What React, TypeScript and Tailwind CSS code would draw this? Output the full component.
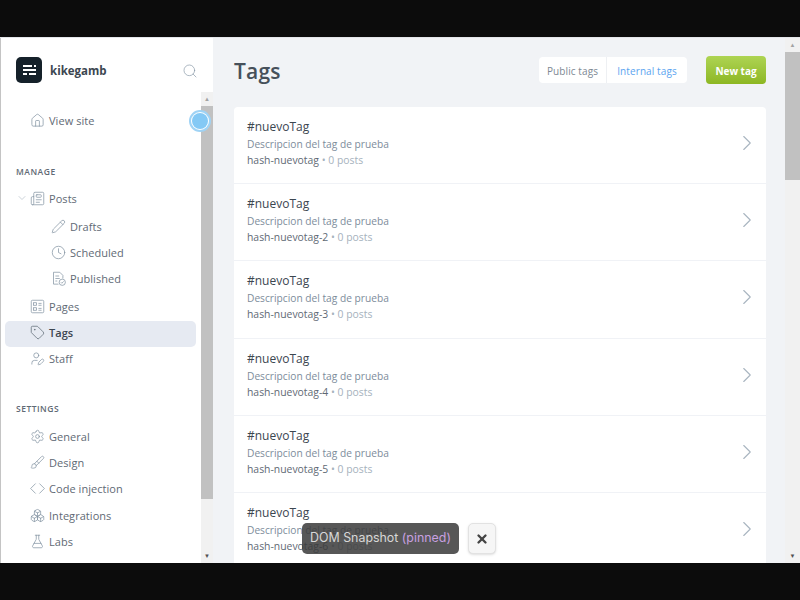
import React from "react";
import {
  Boxes,
  Brush,
  ChevronDown,
  ChevronRight,
  Clock,
  FlaskConical,
  House,
  Newspaper,
  Pencil,
  Search,
  Settings,
  Tag,
  UserPen,
  X,
} from "lucide-react";

type IconProps = { className?: string; size?: number; strokeWidth?: number };
type Item = { label: string; icon: React.ElementType; sub?: boolean; active?: boolean; caret?: boolean; spacing?: string };

function PagesIcon({ className, size, strokeWidth }: IconProps) {
  return (
    <svg className={className} width={size} height={size} viewBox="0 0 24 24" fill="none" stroke="currentColor" strokeWidth={strokeWidth}>
      <rect x="2" y="2" width="20" height="20" rx="2" />
      <rect x="5.5" y="6" width="5" height="4" />
      <rect x="5.5" y="14" width="5" height="4" />
      <path d="M13.5 7h5M13.5 10h5M13.5 15h5M13.5 18h5" />
    </svg>
  );
}

function PublishedIcon({ className, size, strokeWidth }: IconProps) {
  return (
    <svg className={className} width={size} height={size} viewBox="0 0 24 24" fill="none" stroke="currentColor" strokeWidth={strokeWidth}>
      <path d="M12 21H4V2h10l5 5v5" />
      <path d="M7 8h6M7 12h7M7 16h3" />
      <circle cx="18" cy="18" r="5" />
      <path d="M15.8 18l1.6 1.6 2.8-3" />
    </svg>
  );
}

function CodeIcon({ className, size, strokeWidth }: IconProps) {
  return (
    <svg className={className} width={size} height={size} viewBox="0 0 24 24" fill="none" stroke="currentColor" strokeWidth={strokeWidth}>
      <path d="M9 4l-8 8 8 8M15 4l8 8-8 8" />
    </svg>
  );
}

const manage: Item[] = [
  { label: "Posts", icon: Newspaper, caret: true },
  { label: "Drafts", icon: Pencil, sub: true, spacing: "mt-[2px]" },
  { label: "Scheduled", icon: Clock, sub: true },
  { label: "Published", icon: PublishedIcon, sub: true },
  { label: "Pages", icon: PagesIcon, spacing: "mt-[2px]" },
  { label: "Tags", icon: Tag, active: true },
  { label: "Staff", icon: UserPen },
];

const settings: Item[] = [
  { label: "General", icon: Settings },
  { label: "Design", icon: Brush },
  { label: "Code injection", icon: CodeIcon },
  { label: "Integrations", icon: Boxes, spacing: "mt-[1px]" },
  { label: "Labs", icon: FlaskConical },
];

const tags = ["hash-nuevotag", "hash-nuevotag-2", "hash-nuevotag-3", "hash-nuevotag-4", "hash-nuevotag-5", "hash-nuevotag-6"];

function NavRow({ item }: { item: Item }) {
  const Icon = item.icon;
  return (
    <div
      className={`relative flex items-center h-[26px] pb-[3px] ml-[4px] mr-[5px] rounded-[5px] ${item.spacing ?? ""} ${item.sub ? "pl-[46px]" : "pl-[25px]"} ${item.active ? "bg-[#e6eaf2] font-semibold text-[#3c4650]" : "text-[#5f6a75]"}`}
    >
      {item.caret && <ChevronDown className="absolute left-[11px] top-[5px] text-[#a9b5c0]" size={12} strokeWidth={1.2} />}
      <Icon className={item.active ? "text-[#5f6b76]" : "text-[#8595a4]"} size={15} strokeWidth={1.2} />
      <span className="ml-[4px] text-[11px] leading-none tracking-[0.05px]">{item.label}</span>
    </div>
  );
}

function Scrollbar({ thumbHeight, width }: { thumbHeight: number; width: string }) {
  return (
    <div className={`${width} shrink-0 bg-[#f1f1f1] flex flex-col items-center`}>
      <div className="h-[14px] shrink-0 flex items-center justify-center text-[6px] text-[#a3a3a3]">▲</div>
      <div className="flex-1 w-full">
        <div className="w-full bg-[#c1c1c1]" style={{ height: thumbHeight }} />
      </div>
      <div className="h-[14px] shrink-0 flex items-center justify-center text-[6px] text-[#505050]">▼</div>
    </div>
  );
}

export default function App() {
  return (
    <div className="relative h-screen w-full bg-[#0c0c0c] py-[37px] font-['Open_Sans','Noto_Sans',sans-serif]">
      <div className="flex h-full w-full overflow-hidden border-t border-[#e4e6ea]">
        {/* Sidebar */}
        <aside className="w-[213px] shrink-0 flex flex-col bg-white border-l border-[#c4c4c4]">
          <div className="h-[54px] shrink-0 flex items-center pl-[15px] pr-[15px] pt-[9px]">
            <div className="w-[26px] h-[26px] rounded-[5px] bg-[#15212a] flex flex-col items-center justify-center gap-[2px]">
              <div className="flex gap-[2px]">
                <span className="w-[9px] h-[2px] bg-white" />
                <span className="w-[2px] h-[2px] bg-white" />
              </div>
              <div className="w-[13px] h-[2px] bg-white" />
              <div className="flex gap-[2px]">
                <span className="w-[4px] h-[2px] bg-white" />
                <span className="w-[7px] h-[2px] bg-white" />
              </div>
            </div>
            <span className="ml-[8px] mt-[2px] text-[11.5px] font-bold text-[#3c4650]">kikegamb</span>
            <Search className="ml-auto mt-[2px] text-[#8595a4]" size={16} strokeWidth={1} />
          </div>
          <div className="flex flex-1 min-h-0">
            <nav className="flex-1 min-w-0 pt-[17px] overflow-hidden">
              <NavRow item={{ label: "View site", icon: House }} />
              <div className="mt-[31px] mb-[9px] pl-[15px] text-[8.5px] font-semibold tracking-[0.5px] leading-[12px] text-[#5f6a75]">MANAGE</div>
              {manage.map((item) => (
                <NavRow key={item.label} item={item} />
              ))}
              <div className="mt-[30px] mb-[10px] pl-[15px] text-[8.5px] font-semibold tracking-[0.5px] leading-[12px] text-[#5f6a75]">SETTINGS</div>
              {settings.map((item) => (
                <NavRow key={item.label} item={item} />
              ))}
            </nav>
            <Scrollbar thumbHeight={393} width="w-[12px]" />
          </div>
        </aside>

        {/* Main */}
        <main className="flex-1 min-w-0 bg-[#f1f3f6] pl-[21px] pr-[19px] pt-[17px] overflow-hidden">
          <div className="flex items-center h-[30px]">
            <h1 className="mt-[3px] text-[21px] font-semibold text-[#46505a] tracking-[0.2px]">Tags</h1>
            <div className="ml-auto flex h-[26px] rounded-[4px] bg-white text-[10px] font-medium tracking-[0.1px]">
              <span className="w-[68px] pt-[2px] flex items-center justify-center border-r border-[#eef0f3] text-[#7d8893]">Public tags</span>
              <span className="w-[80px] pt-[2px] flex items-center justify-center text-[#5ba4f0]">Internal tags</span>
            </div>
            <button className="ml-[19px] w-[60px] h-[28px] pt-[2px] rounded-[4px] bg-gradient-to-b from-[#aed452] to-[#8db722] text-[10px] font-bold text-white">New tag</button>
          </div>
          <div className="mt-[22px] rounded-[4px] bg-white">
            {tags.map((slug) => (
              <div key={slug} className="relative h-[77.2px] border-b border-[#f0f2f6] pl-[13px] pt-[12px]">
                <div className="text-[12px] leading-[16px] text-[#3c4650]">#nuevoTag</div>
                <div className="mt-[2px] text-[10.2px] leading-[15px] text-[#7d8c9b]">Descripcion del tag de prueba</div>
                <div className="mt-[1px] text-[10.4px] leading-[15px] text-[#5f6a75]">
                  {slug} <span className="text-[#a6b2bd]">• 0 posts</span>
                </div>
                <ChevronRight className="absolute right-[6px] top-[23px] text-[#a9b5c0]" size={26} strokeWidth={1} />
              </div>
            ))}
          </div>
        </main>
        <Scrollbar thumbHeight={128} width="w-[15px]" />
      </div>

      {/* Blue status dot */}
      <div className="absolute left-[189px] top-[110px] w-[22px] h-[22px] rounded-full border-2 border-[#9fd3f5] bg-white p-[1px]">
        <div className="w-full h-full rounded-full bg-[#84c9f5]" />
      </div>

      {/* Pinned snapshot toast */}
      <div className="absolute left-[302px] top-[523px] h-[31px] w-[157px] flex items-center justify-center rounded-[5px] bg-[#3a3a3a]/85 text-[12.4px] text-[#d8d8d8] font-['Inter',sans-serif]">
        DOM Snapshot&nbsp;<span className="text-[#c9a0e0]">(pinned)</span>
      </div>
      <div className="absolute left-[468px] top-[523px] w-[28px] h-[31px] flex items-center justify-center rounded-[5px] bg-[#f6f6f6] border border-[#e2e2e2] shadow-sm">
        <X className="text-[#444444]" size={14} strokeWidth={4} />
      </div>
    </div>
  );
}
